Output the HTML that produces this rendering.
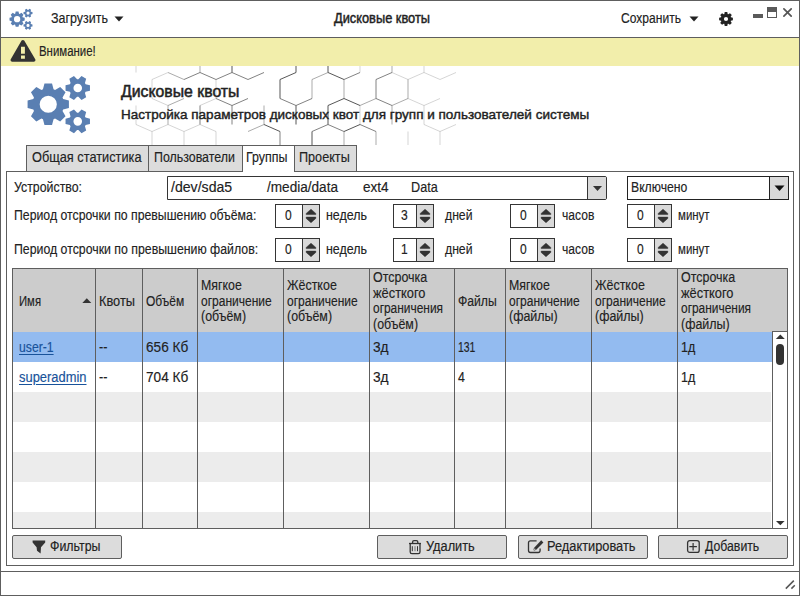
<!DOCTYPE html>
<html><head><meta charset="utf-8">
<style>
*{margin:0;padding:0;box-sizing:border-box}
html,body{width:800px;height:596px;overflow:hidden;background:#fff}
body{position:relative;font-family:"Liberation Sans",sans-serif;font-size:12.5px;color:#222}
.a{position:absolute}
.t{position:absolute;white-space:nowrap;line-height:15px;transform-origin:0 0;-webkit-text-stroke:0.15px currentColor}
</style></head><body>
<div class="a" style="left:0px;top:0px;width:800px;height:596px;border:1px solid #5e5e5e;background:#fff;"></div>
<div class="a" style="left:1px;top:37px;width:798px;height:1px;background:#5e5e5e;"></div>
<div class="a" style="left:1px;top:38px;width:798px;height:28px;background:#f2eeab;"></div>
<svg class="a" style="left:0;top:0" width="40" height="37" viewBox="0 0 40 37">
<g fill="#5a7fb2" fill-rule="evenodd">
<path transform="translate(17.1,19.2) scale(0.367)" d="M-5.30,-14.89 L-3.78,-20.66 L3.78,-20.66 L5.30,-14.89 L5.80,-14.70 L6.29,-14.49 L6.78,-14.27 L11.93,-17.28 L17.28,-11.93 L14.27,-6.78 L14.49,-6.29 L14.70,-5.80 L14.89,-5.30 L20.66,-3.78 L20.66,3.78 L14.89,5.30 L14.70,5.80 L14.49,6.29 L14.27,6.78 L17.28,11.93 L11.93,17.28 L6.78,14.27 L6.29,14.49 L5.80,14.70 L5.30,14.89 L3.78,20.66 L-3.78,20.66 L-5.30,14.89 L-5.80,14.70 L-6.29,14.49 L-6.78,14.27 L-11.93,17.28 L-17.28,11.93 L-14.27,6.78 L-14.49,6.29 L-14.70,5.80 L-14.89,5.30 L-20.66,3.78 L-20.66,-3.78 L-14.89,-5.30 L-14.70,-5.80 L-14.49,-6.29 L-14.27,-6.78 L-17.28,-11.93 L-11.93,-17.28 L-6.78,-14.27 L-6.29,-14.49 L-5.80,-14.70ZM8.60,0.00A8.6,8.6 0 1 0 -8.60,0.00A8.6,8.6 0 1 0 8.60,0.00Z"/>
<path transform="translate(28.0,13.1) scale(0.367)" d="M7.84,-3.77 L12.21,-2.68 L12.21,2.68 L7.84,3.77 L7.64,4.16 L7.42,4.54 L7.19,4.90 L8.42,9.23 L3.78,11.91 L0.65,8.68 L0.22,8.70 L-0.22,8.70 L-0.65,8.68 L-3.78,11.91 L-8.42,9.23 L-7.19,4.90 L-7.42,4.54 L-7.64,4.16 L-7.84,3.77 L-12.21,2.68 L-12.21,-2.68 L-7.84,-3.77 L-7.64,-4.16 L-7.42,-4.54 L-7.19,-4.90 L-8.42,-9.23 L-3.78,-11.91 L-0.65,-8.68 L-0.22,-8.70 L0.22,-8.70 L0.65,-8.68 L3.78,-11.91 L8.42,-9.23 L7.19,-4.90 L7.42,-4.54 L7.64,-4.16ZM4.30,0.00A4.3,4.3 0 1 0 -4.30,0.00A4.3,4.3 0 1 0 4.30,0.00Z"/>
<path transform="translate(28.0,25.4) scale(0.367)" d="M7.84,-3.77 L12.21,-2.68 L12.21,2.68 L7.84,3.77 L7.64,4.16 L7.42,4.54 L7.19,4.90 L8.42,9.23 L3.78,11.91 L0.65,8.68 L0.22,8.70 L-0.22,8.70 L-0.65,8.68 L-3.78,11.91 L-8.42,9.23 L-7.19,4.90 L-7.42,4.54 L-7.64,4.16 L-7.84,3.77 L-12.21,2.68 L-12.21,-2.68 L-7.84,-3.77 L-7.64,-4.16 L-7.42,-4.54 L-7.19,-4.90 L-8.42,-9.23 L-3.78,-11.91 L-0.65,-8.68 L-0.22,-8.70 L0.22,-8.70 L0.65,-8.68 L3.78,-11.91 L8.42,-9.23 L7.19,-4.90 L7.42,-4.54 L7.64,-4.16ZM4.30,0.00A4.3,4.3 0 1 0 -4.30,0.00A4.3,4.3 0 1 0 4.30,0.00Z"/>
</g></svg>
<div class="t" style="left:50.90px;top:10.75px;font-size:14.0px;font-weight:normal;color:#222;transform:scaleX(0.8917);">Загрузить</div>
<svg class="a" style="left:114px;top:16px" width="10" height="6"><path d="M0.5,0.5 L9.5,0.5 L5,5.5Z" fill="#222"/></svg>
<div class="t" style="left:333.70px;top:11.15px;font-size:14.0px;font-weight:normal;color:#222;transform:scaleX(0.9151);-webkit-text-stroke:0.45px #222">Дисковые квоты</div>
<div class="t" style="left:621.40px;top:10.75px;font-size:14.0px;font-weight:normal;color:#222;transform:scaleX(0.8625);">Сохранить</div>
<svg class="a" style="left:689px;top:16px" width="10" height="6"><path d="M0.5,0.5 L9.5,0.5 L5,5.5Z" fill="#222"/></svg>
<svg class="a" style="left:716px;top:9px" width="20" height="20"><path fill="#222" fill-rule="evenodd" transform="translate(10,10)" d="M-1.67,-4.92 L-1.29,-6.88 L1.29,-6.88 L1.67,-4.92 L1.88,-4.85 L2.09,-4.76 L2.30,-4.66 L3.95,-5.78 L5.78,-3.95 L4.66,-2.30 L4.76,-2.09 L4.85,-1.88 L4.92,-1.67 L6.88,-1.29 L6.88,1.29 L4.92,1.67 L4.85,1.88 L4.76,2.09 L4.66,2.30 L5.78,3.95 L3.95,5.78 L2.30,4.66 L2.09,4.76 L1.88,4.85 L1.67,4.92 L1.29,6.88 L-1.29,6.88 L-1.67,4.92 L-1.88,4.85 L-2.09,4.76 L-2.30,4.66 L-3.95,5.78 L-5.78,3.95 L-4.66,2.30 L-4.76,2.09 L-4.85,1.88 L-4.92,1.67 L-6.88,1.29 L-6.88,-1.29 L-4.92,-1.67 L-4.85,-1.88 L-4.76,-2.09 L-4.66,-2.30 L-5.78,-3.95 L-3.95,-5.78 L-2.30,-4.66 L-2.09,-4.76 L-1.88,-4.85ZM2.10,0.00A2.1,2.1 0 1 0 -2.10,0.00A2.1,2.1 0 1 0 2.10,0.00Z"/></svg>
<div class="a" style="left:753px;top:14px;width:10px;height:4px;background:#5a5a5a;"></div>
<div class="a" style="left:767px;top:7px;width:10px;height:11px;border:1px solid #5a5a5a;background:#fff;"></div>
<div class="a" style="left:767px;top:7px;width:10px;height:5px;background:#5a5a5a;"></div>
<svg class="a" style="left:781px;top:6px" width="14" height="14"><path d="M2.9,2.9 L10.2,10.2 M10.2,2.9 L2.9,10.2" stroke="#555" stroke-width="1.7" stroke-linecap="round"/></svg>
<svg class="a" style="left:9px;top:38px" width="28" height="26" viewBox="0 0 28 26">
<path fill="#333" fill-rule="evenodd" d="M12.6,2.6 Q13.9,1.2 15.2,2.6 L26.4,21.6 Q26.9,23.7 25,23.7 L3,23.7 Q1.1,23.7 1.6,21.6 Z M12,8.7 L12,15.7 L15.9,15.7 L15.9,8.7 Z M12,17.6 L12,20.7 L15.9,20.7 L15.9,17.6 Z"/></svg>
<div class="t" style="left:39.00px;top:43.75px;font-size:14.0px;font-weight:normal;color:#222;transform:scaleX(0.8155);">Внимание!</div>
<svg class="a" style="left:0;top:66px" width="800" height="79" viewBox="0 66 800 79">
<g fill="none" stroke="#444" stroke-width="0.9"><path d="M136.0,53.5L136.0,72.5M136.0,105.5L136.0,124.5M136.0,124.5L152.0,131.5M136,157.5L152.0,150.5M136.0,176.5L152.0,183.5M152.0,27.5L152.0,46.5M152.0,27.5L168,20.5M152.0,46.5L168,53.5M152.0,79.5L152.0,98.5M152.0,79.5L168.0,72.5M152.0,98.5L168,105.5M152.0,131.5L152.0,150.5M152.0,131.5L168.0,124.5M152.0,150.5L168,157.5M152.0,183.5L168.0,176.5M168.0,124.5L184.0,131.5M168.0,157.5L168.0,176.5M184.0,131.5L184.0,150.5M184.0,131.5L200.0,124.5M200,20.5L216.0,27.5M200,105.5L216.0,98.5M200.0,124.5L216.0,131.5M200.0,157.5L200.0,176.5M216.0,46.5L232,53.5M216.0,79.5L216.0,98.5M216.0,131.5L216.0,150.5M216.0,150.5L232,157.5M216.0,183.5L232.0,176.5M344.0,46.5L360,53.5M360,20.5L376.0,27.5M360.0,53.5L360.0,72.5M360,53.5L376.0,46.5M360.0,105.5L360.0,124.5M376.0,183.5L392.0,176.5M392,53.5L408.0,46.5M392.0,72.5L408.0,79.5M408.0,79.5L424.0,72.5M408.0,98.5L424,105.5M408.0,131.5L408.0,150.5M424,20.5L440.0,27.5M424.0,53.5L424.0,72.5M424,53.5L440.0,46.5M424.0,72.5L440.0,79.5M424.0,105.5L424.0,124.5M424,105.5L440.0,98.5M424.0,124.5L440.0,131.5M424.0,157.5L424.0,176.5M424,157.5L440.0,150.5M424.0,176.5L440.0,183.5M440.0,27.5L440.0,46.5M440.0,79.5L456.0,72.5M440.0,131.5L440.0,150.5M440.0,131.5L456.0,124.5M440.0,150.5L456,157.5" stroke-opacity="0.25"/><path d="M168,20.5L184.0,27.5M168,53.5L184.0,46.5M168.0,72.5L184.0,79.5M168.0,105.5L168.0,124.5M168,105.5L184.0,98.5M168,157.5L184.0,150.5M184.0,27.5L184.0,46.5M200.0,53.5L200.0,72.5M248.0,27.5L264,20.5M248.0,46.5L264,53.5M248.0,131.5L264.0,124.5M248.0,183.5L264.0,176.5M264.0,105.5L264.0,124.5M264.0,176.5L280.0,183.5M280.0,27.5L280.0,46.5M280.0,27.5L296,20.5M280.0,183.5L296.0,176.5M296,20.5L312.0,27.5M312.0,79.5L312.0,98.5M312.0,79.5L328.0,72.5M312.0,183.5L328.0,176.5M328,20.5L344.0,27.5M328.0,157.5L328.0,176.5M328.0,176.5L344.0,183.5M344.0,79.5L344.0,98.5M344.0,131.5L344.0,150.5M360,105.5L376.0,98.5M360,157.5L376.0,150.5M360.0,176.5L376.0,183.5M376.0,46.5L392,53.5M376.0,131.5L376.0,150.5M392,20.5L408.0,27.5M392.0,53.5L392.0,72.5M392.0,105.5L392.0,124.5M392,105.5L408.0,98.5M392.0,176.5L408.0,183.5M408.0,27.5L408.0,46.5M408.0,46.5L424,53.5M408.0,79.5L408.0,98.5M408.0,183.5L424.0,176.5" stroke-opacity="0.5"/><path d="M184.0,79.5L200.0,72.5M184.0,150.5L200,157.5M200,53.5L216.0,46.5M200.0,72.5L216.0,79.5M200.0,105.5L200.0,124.5M200,157.5L216.0,150.5M200.0,176.5L216.0,183.5M216.0,79.5L232.0,72.5M216.0,98.5L232,105.5M232,20.5L248.0,27.5M232,53.5L248.0,46.5M232.0,72.5L248.0,79.5M232.0,105.5L232.0,124.5M232,105.5L248.0,98.5M248.0,79.5L264.0,72.5M264.0,157.5L264.0,176.5M280.0,98.5L296,105.5M280.0,131.5L280.0,150.5M296,105.5L312.0,98.5M296.0,157.5L296.0,176.5M296.0,176.5L312.0,183.5M312.0,46.5L328,53.5M312.0,131.5L328.0,124.5M328.0,124.5L344.0,131.5M328,157.5L344.0,150.5M344.0,79.5L360.0,72.5M360.0,124.5L376.0,131.5M360.0,157.5L360.0,176.5M376.0,27.5L376.0,46.5M376.0,79.5L376.0,98.5M376.0,79.5L392.0,72.5M376.0,98.5L392,105.5M376.0,150.5L392,157.5" stroke-opacity="0.75"/><path d="M232.0,53.5L232.0,72.5M232.0,157.5L232.0,176.5M232,157.5L248.0,150.5M232.0,176.5L248.0,183.5M248.0,27.5L248.0,46.5M264.0,124.5L280.0,131.5M280.0,79.5L280.0,98.5M280.0,79.5L296.0,72.5M296.0,53.5L296.0,72.5M296.0,105.5L296.0,124.5M312.0,27.5L312.0,46.5M312.0,27.5L328,20.5M312.0,131.5L312.0,150.5M312.0,150.5L328,157.5M328.0,53.5L328.0,72.5M328,53.5L344.0,46.5M328.0,72.5L344.0,79.5M328.0,105.5L328.0,124.5M328,105.5L344.0,98.5M344.0,98.5L360,105.5M344.0,131.5L360.0,124.5M344.0,150.5L360,157.5M344.0,183.5L360.0,176.5" stroke-opacity="1.0"/></g>
</svg>
<svg class="a" style="left:0;top:66px" width="100" height="79" viewBox="0 66 100 79">
<g fill="#5a7fb2" fill-rule="evenodd">
<path transform="translate(48.25,104.25)" d="M-5.30,-14.89 L-3.78,-20.66 L3.78,-20.66 L5.30,-14.89 L5.80,-14.70 L6.29,-14.49 L6.78,-14.27 L11.93,-17.28 L17.28,-11.93 L14.27,-6.78 L14.49,-6.29 L14.70,-5.80 L14.89,-5.30 L20.66,-3.78 L20.66,3.78 L14.89,5.30 L14.70,5.80 L14.49,6.29 L14.27,6.78 L17.28,11.93 L11.93,17.28 L6.78,14.27 L6.29,14.49 L5.80,14.70 L5.30,14.89 L3.78,20.66 L-3.78,20.66 L-5.30,14.89 L-5.80,14.70 L-6.29,14.49 L-6.78,14.27 L-11.93,17.28 L-17.28,11.93 L-14.27,6.78 L-14.49,6.29 L-14.70,5.80 L-14.89,5.30 L-20.66,3.78 L-20.66,-3.78 L-14.89,-5.30 L-14.70,-5.80 L-14.49,-6.29 L-14.27,-6.78 L-17.28,-11.93 L-11.93,-17.28 L-6.78,-14.27 L-6.29,-14.49 L-5.80,-14.70ZM8.60,0.00A8.6,8.6 0 1 0 -8.60,0.00A8.6,8.6 0 1 0 8.60,0.00Z"/>
<path transform="translate(77.75,88)" d="M7.84,-3.77 L12.21,-2.68 L12.21,2.68 L7.84,3.77 L7.64,4.16 L7.42,4.54 L7.19,4.90 L8.42,9.23 L3.78,11.91 L0.65,8.68 L0.22,8.70 L-0.22,8.70 L-0.65,8.68 L-3.78,11.91 L-8.42,9.23 L-7.19,4.90 L-7.42,4.54 L-7.64,4.16 L-7.84,3.77 L-12.21,2.68 L-12.21,-2.68 L-7.84,-3.77 L-7.64,-4.16 L-7.42,-4.54 L-7.19,-4.90 L-8.42,-9.23 L-3.78,-11.91 L-0.65,-8.68 L-0.22,-8.70 L0.22,-8.70 L0.65,-8.68 L3.78,-11.91 L8.42,-9.23 L7.19,-4.90 L7.42,-4.54 L7.64,-4.16ZM4.30,0.00A4.3,4.3 0 1 0 -4.30,0.00A4.3,4.3 0 1 0 4.30,0.00Z"/>
<path transform="translate(77.75,121.35)" d="M7.84,-3.77 L12.21,-2.68 L12.21,2.68 L7.84,3.77 L7.64,4.16 L7.42,4.54 L7.19,4.90 L8.42,9.23 L3.78,11.91 L0.65,8.68 L0.22,8.70 L-0.22,8.70 L-0.65,8.68 L-3.78,11.91 L-8.42,9.23 L-7.19,4.90 L-7.42,4.54 L-7.64,4.16 L-7.84,3.77 L-12.21,2.68 L-12.21,-2.68 L-7.84,-3.77 L-7.64,-4.16 L-7.42,-4.54 L-7.19,-4.90 L-8.42,-9.23 L-3.78,-11.91 L-0.65,-8.68 L-0.22,-8.70 L0.22,-8.70 L0.65,-8.68 L3.78,-11.91 L8.42,-9.23 L7.19,-4.90 L7.42,-4.54 L7.64,-4.16ZM4.30,0.00A4.3,4.3 0 1 0 -4.30,0.00A4.3,4.3 0 1 0 4.30,0.00Z"/>
</g></svg>
<div class="t" style="left:121.10px;top:84.09px;font-size:15.6px;font-weight:normal;color:#222;transform:scaleX(1.0138);-webkit-text-stroke:0.5px #222">Дисковые квоты</div>
<div class="t" style="left:121.40px;top:106.59px;font-size:13.6px;font-weight:normal;color:#222;transform:scaleX(0.9942);-webkit-text-stroke:0.42px #222">Настройка параметров дисковых квот для групп и пользователей системы</div>
<div class="a" style="left:26px;top:145px;width:123px;height:27px;border:1px solid #5e5e5e;background:#dcdcdc;"></div>
<div class="a" style="left:148px;top:145px;width:95px;height:27px;border:1px solid #5e5e5e;background:#dcdcdc;"></div>
<div class="a" style="left:294px;top:145px;width:63px;height:27px;border:1px solid #5e5e5e;background:#dcdcdc;"></div>
<div class="a" style="left:6px;top:171px;width:788px;height:395px;border:1px solid #5e5e5e;background:#fff;"></div>
<div class="a" style="left:242px;top:145px;width:53px;height:27px;border:1px solid #5e5e5e;background:#fff;border-bottom:none"></div>
<div class="t" style="left:31.90px;top:149.65px;font-size:14.0px;font-weight:normal;color:#222;transform:scaleX(0.9117);">Общая статистика</div>
<div class="t" style="left:153.80px;top:149.65px;font-size:14.0px;font-weight:normal;color:#222;transform:scaleX(0.8853);">Пользователи</div>
<div class="t" style="left:246.00px;top:149.65px;font-size:14.0px;font-weight:normal;color:#222;transform:scaleX(0.8896);">Группы</div>
<div class="t" style="left:299.40px;top:149.65px;font-size:14.0px;font-weight:normal;color:#222;transform:scaleX(0.9033);">Проекты</div>
<div class="t" style="left:14.10px;top:179.65px;font-size:14.0px;font-weight:normal;color:#222;transform:scaleX(0.8817);">Устройство:</div>
<div class="a" style="left:167px;top:176px;width:440px;height:24px;border:1px solid #353535;background:#fff;border-radius:0 2px 2px 0"></div>
<div class="a" style="left:587px;top:177px;width:1px;height:22px;background:#353535;"></div>
<div class="a" style="left:588px;top:177px;width:18px;height:22px;background:#d9d9d9;border-radius:0 1px 1px 0"></div>
<svg class="a" style="left:592px;top:185px" width="11" height="7"><path d="M1,1 L10,1 L5.5,5.9Z" fill="#333"/></svg>
<div class="t" style="left:170.80px;top:179.65px;font-size:14.0px;font-weight:normal;color:#222;transform:scaleX(1.0082);">/dev/sda5</div>
<div class="t" style="left:267.40px;top:179.65px;font-size:14.0px;font-weight:normal;color:#222;transform:scaleX(0.9704);">/media/data</div>
<div class="t" style="left:362.80px;top:179.65px;font-size:14.0px;font-weight:normal;color:#222;transform:scaleX(0.9675);">ext4</div>
<div class="t" style="left:411.00px;top:179.65px;font-size:14.0px;font-weight:normal;color:#222;transform:scaleX(0.9026);">Data</div>
<div class="a" style="left:627px;top:176px;width:162px;height:24px;border:1px solid #222;background:#fff;"></div>
<div class="a" style="left:769px;top:177px;width:1px;height:22px;background:#222;"></div>
<div class="a" style="left:770px;top:177px;width:18px;height:22px;background:#d9d9d9;"></div>
<svg class="a" style="left:774px;top:185px" width="11" height="7"><path d="M0.5,0.5 L10.5,0.5 L5.5,6Z" fill="#111"/></svg>
<div class="t" style="left:630.80px;top:179.65px;font-size:14.0px;font-weight:normal;color:#222;transform:scaleX(0.8718);">Включено</div>
<div class="t" style="left:14.15px;top:207.85px;font-size:14.0px;font-weight:normal;color:#222;transform:scaleX(0.8774);">Период отсрочки по превышению объёма:</div>
<div class="a" style="left:275px;top:204px;width:45px;height:24px;border:1px solid #353535;background:#fff;"></div>
<div class="a" style="left:302px;top:205px;width:1px;height:22px;background:#353535;"></div>
<div class="a" style="left:303px;top:205px;width:16px;height:22px;background:#d9d9d9;"></div>
<svg class="a" style="left:305.0px;top:208px" width="12" height="16"><path d="M1.2,6.6 L1.2,5.4 L6,1.2 L10.8,5.4 L10.8,6.6Z M1.2,9.1 L10.8,9.1 L10.8,10.4 L6,14.7 L1.2,10.4Z" fill="#333" stroke="#333" stroke-width="0.5" stroke-linejoin="round"/></svg>
<div class="t" style="left:284.90px;top:207.65px;font-size:14.0px;font-weight:normal;color:#222;transform:scaleX(0.8600);">0</div>
<div class="t" style="left:326.40px;top:207.85px;font-size:14.0px;font-weight:normal;color:#222;transform:scaleX(0.8883);">недель</div>
<div class="a" style="left:393px;top:204px;width:41px;height:24px;border:1px solid #353535;background:#fff;"></div>
<div class="a" style="left:416px;top:205px;width:1px;height:22px;background:#353535;"></div>
<div class="a" style="left:417px;top:205px;width:16px;height:22px;background:#d9d9d9;"></div>
<svg class="a" style="left:419.0px;top:208px" width="12" height="16"><path d="M1.2,6.6 L1.2,5.4 L6,1.2 L10.8,5.4 L10.8,6.6Z M1.2,9.1 L10.8,9.1 L10.8,10.4 L6,14.7 L1.2,10.4Z" fill="#333" stroke="#333" stroke-width="0.5" stroke-linejoin="round"/></svg>
<div class="t" style="left:400.90px;top:207.65px;font-size:14.0px;font-weight:normal;color:#222;transform:scaleX(0.8600);">3</div>
<div class="t" style="left:444.70px;top:207.85px;font-size:14.0px;font-weight:normal;color:#222;transform:scaleX(0.8726);">дней</div>
<div class="a" style="left:510px;top:204px;width:45px;height:24px;border:1px solid #353535;background:#fff;"></div>
<div class="a" style="left:537px;top:205px;width:1px;height:22px;background:#353535;"></div>
<div class="a" style="left:538px;top:205px;width:16px;height:22px;background:#d9d9d9;"></div>
<svg class="a" style="left:540.0px;top:208px" width="12" height="16"><path d="M1.2,6.6 L1.2,5.4 L6,1.2 L10.8,5.4 L10.8,6.6Z M1.2,9.1 L10.8,9.1 L10.8,10.4 L6,14.7 L1.2,10.4Z" fill="#333" stroke="#333" stroke-width="0.5" stroke-linejoin="round"/></svg>
<div class="t" style="left:519.90px;top:207.65px;font-size:14.0px;font-weight:normal;color:#222;transform:scaleX(0.8600);">0</div>
<div class="t" style="left:562.00px;top:207.85px;font-size:14.0px;font-weight:normal;color:#222;transform:scaleX(0.8622);">часов</div>
<div class="a" style="left:627px;top:204px;width:45px;height:24px;border:1px solid #353535;background:#fff;"></div>
<div class="a" style="left:654px;top:205px;width:1px;height:22px;background:#353535;"></div>
<div class="a" style="left:655px;top:205px;width:16px;height:22px;background:#d9d9d9;"></div>
<svg class="a" style="left:657.0px;top:208px" width="12" height="16"><path d="M1.2,6.6 L1.2,5.4 L6,1.2 L10.8,5.4 L10.8,6.6Z M1.2,9.1 L10.8,9.1 L10.8,10.4 L6,14.7 L1.2,10.4Z" fill="#333" stroke="#333" stroke-width="0.5" stroke-linejoin="round"/></svg>
<div class="t" style="left:636.90px;top:207.65px;font-size:14.0px;font-weight:normal;color:#222;transform:scaleX(0.8600);">0</div>
<div class="t" style="left:678.40px;top:207.85px;font-size:14.0px;font-weight:normal;color:#222;transform:scaleX(0.8190);">минут</div>
<div class="t" style="left:14.15px;top:241.65px;font-size:14.0px;font-weight:normal;color:#222;transform:scaleX(0.8795);">Период отсрочки по превышению файлов:</div>
<div class="a" style="left:275px;top:238px;width:45px;height:24px;border:1px solid #353535;background:#fff;"></div>
<div class="a" style="left:302px;top:239px;width:1px;height:22px;background:#353535;"></div>
<div class="a" style="left:303px;top:239px;width:16px;height:22px;background:#d9d9d9;"></div>
<svg class="a" style="left:305.0px;top:242px" width="12" height="16"><path d="M1.2,6.6 L1.2,5.4 L6,1.2 L10.8,5.4 L10.8,6.6Z M1.2,9.1 L10.8,9.1 L10.8,10.4 L6,14.7 L1.2,10.4Z" fill="#333" stroke="#333" stroke-width="0.5" stroke-linejoin="round"/></svg>
<div class="t" style="left:284.90px;top:241.65px;font-size:14.0px;font-weight:normal;color:#222;transform:scaleX(0.8600);">0</div>
<div class="t" style="left:326.40px;top:241.65px;font-size:14.0px;font-weight:normal;color:#222;transform:scaleX(0.8883);">недель</div>
<div class="a" style="left:393px;top:238px;width:41px;height:24px;border:1px solid #353535;background:#fff;"></div>
<div class="a" style="left:416px;top:239px;width:1px;height:22px;background:#353535;"></div>
<div class="a" style="left:417px;top:239px;width:16px;height:22px;background:#d9d9d9;"></div>
<svg class="a" style="left:419.0px;top:242px" width="12" height="16"><path d="M1.2,6.6 L1.2,5.4 L6,1.2 L10.8,5.4 L10.8,6.6Z M1.2,9.1 L10.8,9.1 L10.8,10.4 L6,14.7 L1.2,10.4Z" fill="#333" stroke="#333" stroke-width="0.5" stroke-linejoin="round"/></svg>
<div class="t" style="left:400.90px;top:241.65px;font-size:14.0px;font-weight:normal;color:#222;transform:scaleX(0.8600);">1</div>
<div class="t" style="left:444.70px;top:241.65px;font-size:14.0px;font-weight:normal;color:#222;transform:scaleX(0.8726);">дней</div>
<div class="a" style="left:510px;top:238px;width:45px;height:24px;border:1px solid #353535;background:#fff;"></div>
<div class="a" style="left:537px;top:239px;width:1px;height:22px;background:#353535;"></div>
<div class="a" style="left:538px;top:239px;width:16px;height:22px;background:#d9d9d9;"></div>
<svg class="a" style="left:540.0px;top:242px" width="12" height="16"><path d="M1.2,6.6 L1.2,5.4 L6,1.2 L10.8,5.4 L10.8,6.6Z M1.2,9.1 L10.8,9.1 L10.8,10.4 L6,14.7 L1.2,10.4Z" fill="#333" stroke="#333" stroke-width="0.5" stroke-linejoin="round"/></svg>
<div class="t" style="left:519.90px;top:241.65px;font-size:14.0px;font-weight:normal;color:#222;transform:scaleX(0.8600);">0</div>
<div class="t" style="left:562.00px;top:241.65px;font-size:14.0px;font-weight:normal;color:#222;transform:scaleX(0.8622);">часов</div>
<div class="a" style="left:627px;top:238px;width:45px;height:24px;border:1px solid #353535;background:#fff;"></div>
<div class="a" style="left:654px;top:239px;width:1px;height:22px;background:#353535;"></div>
<div class="a" style="left:655px;top:239px;width:16px;height:22px;background:#d9d9d9;"></div>
<svg class="a" style="left:657.0px;top:242px" width="12" height="16"><path d="M1.2,6.6 L1.2,5.4 L6,1.2 L10.8,5.4 L10.8,6.6Z M1.2,9.1 L10.8,9.1 L10.8,10.4 L6,14.7 L1.2,10.4Z" fill="#333" stroke="#333" stroke-width="0.5" stroke-linejoin="round"/></svg>
<div class="t" style="left:636.90px;top:241.65px;font-size:14.0px;font-weight:normal;color:#222;transform:scaleX(0.8600);">0</div>
<div class="t" style="left:678.40px;top:241.65px;font-size:14.0px;font-weight:normal;color:#222;transform:scaleX(0.8190);">минут</div>
<div class="a" style="left:12px;top:268px;width:776px;height:261px;border:1px solid #5e5e5e;background:#fff;"></div>
<div class="a" style="left:13px;top:269px;width:774px;height:63px;background:#cccccc;"></div>
<div class="a" style="left:13px;top:332px;width:759px;height:30px;background:#93bbf0;"></div>
<div class="a" style="left:13px;top:392px;width:758px;height:30px;background:#ececec;"></div>
<div class="a" style="left:13px;top:452px;width:758px;height:30px;background:#ececec;"></div>
<div class="a" style="left:13px;top:512px;width:758px;height:16px;background:#ececec;"></div>
<div class="a" style="left:95px;top:269px;width:1px;height:259px;background:#5e5e5e;"></div>
<div class="a" style="left:142px;top:269px;width:1px;height:259px;background:#5e5e5e;"></div>
<div class="a" style="left:197px;top:269px;width:1px;height:259px;background:#5e5e5e;"></div>
<div class="a" style="left:283px;top:269px;width:1px;height:259px;background:#5e5e5e;"></div>
<div class="a" style="left:369px;top:269px;width:1px;height:259px;background:#5e5e5e;"></div>
<div class="a" style="left:454px;top:269px;width:1px;height:259px;background:#5e5e5e;"></div>
<div class="a" style="left:505px;top:269px;width:1px;height:259px;background:#5e5e5e;"></div>
<div class="a" style="left:591px;top:269px;width:1px;height:259px;background:#5e5e5e;"></div>
<div class="a" style="left:677px;top:269px;width:1px;height:259px;background:#5e5e5e;"></div>
<div class="t" style="left:18.65px;top:293.65px;font-size:14.0px;font-weight:normal;color:#222;transform:scaleX(0.8067);">Имя</div>
<svg class="a" style="left:82px;top:298px" width="10" height="6"><path d="M0.3,5 L9.3,5 L4.8,0.3Z" fill="#333"/></svg>
<div class="t" style="left:98.90px;top:293.65px;font-size:14.0px;font-weight:normal;color:#222;transform:scaleX(0.9141);">Квоты</div>
<div class="t" style="left:145.65px;top:293.65px;font-size:14.0px;font-weight:normal;color:#222;transform:scaleX(0.8575);">Объём</div>
<div class="t" style="left:200.65px;top:278.05px;font-size:14.0px;font-weight:normal;color:#222;transform:scaleX(0.8820);">Мягкое</div>
<div class="t" style="left:200.65px;top:293.65px;font-size:14.0px;font-weight:normal;color:#222;transform:scaleX(0.8583);">ограничение</div>
<div class="t" style="left:200.65px;top:309.25px;font-size:14.0px;font-weight:normal;color:#222;transform:scaleX(0.8855);">(объём)</div>
<div class="t" style="left:286.65px;top:278.05px;font-size:14.0px;font-weight:normal;color:#222;transform:scaleX(0.8900);">Жёсткое</div>
<div class="t" style="left:286.65px;top:293.65px;font-size:14.0px;font-weight:normal;color:#222;transform:scaleX(0.8583);">ограничение</div>
<div class="t" style="left:286.65px;top:309.25px;font-size:14.0px;font-weight:normal;color:#222;transform:scaleX(0.8855);">(объём)</div>
<div class="t" style="left:372.90px;top:270.25px;font-size:14.0px;font-weight:normal;color:#222;transform:scaleX(0.8904);">Отсрочка</div>
<div class="t" style="left:372.90px;top:285.85px;font-size:14.0px;font-weight:normal;color:#222;transform:scaleX(0.9175);">жёсткого</div>
<div class="t" style="left:372.90px;top:301.45px;font-size:14.0px;font-weight:normal;color:#222;transform:scaleX(0.8512);">ограничения</div>
<div class="t" style="left:372.90px;top:317.05px;font-size:14.0px;font-weight:normal;color:#222;transform:scaleX(0.8855);">(объём)</div>
<div class="t" style="left:457.90px;top:293.65px;font-size:14.0px;font-weight:normal;color:#222;transform:scaleX(0.8712);">Файлы</div>
<div class="t" style="left:508.90px;top:278.05px;font-size:14.0px;font-weight:normal;color:#222;transform:scaleX(0.8820);">Мягкое</div>
<div class="t" style="left:508.90px;top:293.65px;font-size:14.0px;font-weight:normal;color:#222;transform:scaleX(0.8583);">ограничение</div>
<div class="t" style="left:508.90px;top:309.25px;font-size:14.0px;font-weight:normal;color:#222;transform:scaleX(0.8900);">(файлы)</div>
<div class="t" style="left:594.90px;top:278.05px;font-size:14.0px;font-weight:normal;color:#222;transform:scaleX(0.8900);">Жёсткое</div>
<div class="t" style="left:594.90px;top:293.65px;font-size:14.0px;font-weight:normal;color:#222;transform:scaleX(0.8583);">ограничение</div>
<div class="t" style="left:594.90px;top:309.25px;font-size:14.0px;font-weight:normal;color:#222;transform:scaleX(0.8900);">(файлы)</div>
<div class="t" style="left:680.90px;top:270.25px;font-size:14.0px;font-weight:normal;color:#222;transform:scaleX(0.8904);">Отсрочка</div>
<div class="t" style="left:680.90px;top:285.85px;font-size:14.0px;font-weight:normal;color:#222;transform:scaleX(0.9175);">жёсткого</div>
<div class="t" style="left:680.90px;top:301.45px;font-size:14.0px;font-weight:normal;color:#222;transform:scaleX(0.8512);">ограничения</div>
<div class="t" style="left:680.90px;top:317.05px;font-size:14.0px;font-weight:normal;color:#222;transform:scaleX(0.8900);">(файлы)</div>
<div class="t" style="left:18.50px;top:339.95px;font-size:14.0px;font-weight:normal;color:#18529a;transform:scaleX(0.8718);text-decoration:underline;text-underline-offset:2px">user-1</div>
<div class="t" style="left:99.00px;top:339.95px;font-size:14.0px;font-weight:normal;color:#222;transform:scaleX(0.9009);">--</div>
<div class="t" style="left:145.50px;top:339.95px;font-size:14.0px;font-weight:normal;color:#222;transform:scaleX(0.9740);">656 Кб</div>
<div class="t" style="left:372.85px;top:339.95px;font-size:14.0px;font-weight:normal;color:#222;transform:scaleX(0.9774);">3д</div>
<div class="t" style="left:458.30px;top:339.95px;font-size:14.0px;font-weight:normal;color:#222;transform:scaleX(0.7451);">131</div>
<div class="t" style="left:680.90px;top:339.95px;font-size:14.0px;font-weight:normal;color:#222;transform:scaleX(0.8897);">1д</div>
<div class="t" style="left:18.50px;top:369.75px;font-size:14.0px;font-weight:normal;color:#18529a;transform:scaleX(0.9228);text-decoration:underline;text-underline-offset:2px">superadmin</div>
<div class="t" style="left:99.00px;top:369.75px;font-size:14.0px;font-weight:normal;color:#222;transform:scaleX(0.9009);">--</div>
<div class="t" style="left:145.50px;top:369.75px;font-size:14.0px;font-weight:normal;color:#222;transform:scaleX(0.9740);">704 Кб</div>
<div class="t" style="left:372.85px;top:369.75px;font-size:14.0px;font-weight:normal;color:#222;transform:scaleX(0.9774);">3д</div>
<div class="t" style="left:458.30px;top:369.75px;font-size:14.0px;font-weight:normal;color:#222;transform:scaleX(0.8800);">4</div>
<div class="t" style="left:680.90px;top:369.75px;font-size:14.0px;font-weight:normal;color:#222;transform:scaleX(0.8897);">1д</div>
<div class="a" style="left:772px;top:331px;width:16px;height:198px;border:1px solid #5e5e5e;background:#fff;"></div>
<svg class="a" style="left:775px;top:334px" width="11" height="6"><path d="M0.8,5 L9.8,5 L5.3,0.5Z" fill="#333"/></svg>
<div class="a" style="left:776px;top:344px;width:8px;height:21px;border-radius:4px;background:#333"></div>
<svg class="a" style="left:775px;top:520px" width="11" height="6"><path d="M1,1 L9.6,1 L5.3,5.2Z" fill="#333"/></svg>
<div class="a" style="left:12px;top:535px;width:110px;height:24px;border:1px solid #5e5e5e;background:#dcdcdc;border-radius:2px"></div>
<svg class="a" style="left:32px;top:540px" width="14" height="14"><path d="M0.6,0.6 L13.2,0.6 L13.2,2.6 L9,7.2 L8.6,13.6 L5,10.8 L4.6,7.2 L0.6,2.6Z" fill="#333"/></svg>
<div class="t" style="left:50.15px;top:538.75px;font-size:14.0px;font-weight:normal;color:#222;transform:scaleX(0.8845);">Фильтры</div>
<div class="a" style="left:377px;top:535px;width:130px;height:24px;border:1px solid #5e5e5e;background:#dcdcdc;border-radius:2px"></div>
<svg class="a" style="left:408px;top:539px" width="14" height="16"><g fill="none" stroke="#333" stroke-width="1.3" stroke-linejoin="round"><path d="M1,4.5 H13"/><path d="M4.6,4.3 V3 Q4.6,1.6 6,1.6 H8.4 Q9.8,1.6 9.8,3 V4.3"/><path d="M2.2,4.8 V12.9 Q2.2,14.6 3.9,14.6 H10.3 Q12,14.6 12,12.9 V4.8"/></g><g stroke="#333" stroke-width="1"><path d="M4.3,7.2 V12.2 M9.5,7.2 V12.2"/></g><path d="M7,7.2 V12.2" stroke="#777" stroke-width="1"/></svg>
<div class="t" style="left:426.15px;top:538.75px;font-size:14.0px;font-weight:normal;color:#222;transform:scaleX(0.9120);">Удалить</div>
<div class="a" style="left:518px;top:535px;width:130px;height:24px;border:1px solid #5e5e5e;background:#dcdcdc;border-radius:2px"></div>
<svg class="a" style="left:527px;top:539px" width="18" height="15"><path d="M9.6,1.9 H3.4 Q1.5,1.9 1.5,3.8 V11.6 Q1.5,13.5 3.4,13.5 H11.2 Q13.1,13.5 13.1,11.6 V9.6" fill="none" stroke="#333" stroke-width="1.3"/><path d="M14.2,1.3 L16.4,3.5 L9.2,10.7 Q7.8,11.6 6.6,11.3 Q6.3,10.1 7.2,8.7 Z" fill="#333"/><circle cx="7.8" cy="10.3" r="0.7" fill="#ddd"/></svg>
<div class="t" style="left:547.20px;top:538.75px;font-size:14.0px;font-weight:normal;color:#222;transform:scaleX(0.9151);">Редактировать</div>
<div class="a" style="left:658px;top:535px;width:130px;height:24px;border:1px solid #5e5e5e;background:#dcdcdc;border-radius:2px"></div>
<svg class="a" style="left:686px;top:539px" width="15" height="15"><rect x="1.6" y="1.6" width="11.6" height="11.8" rx="2.2" fill="none" stroke="#333" stroke-width="1.3"/><path d="M7.1,4 V11.6 M3.3,7.6 H10.9" stroke="#333" stroke-width="1.2"/></svg>
<div class="t" style="left:704.80px;top:538.75px;font-size:14.0px;font-weight:normal;color:#222;transform:scaleX(0.8769);">Добавить</div>
<div class="a" style="left:1px;top:571px;width:798px;height:1px;background:#5e5e5e;"></div>
<svg class="a" style="left:780px;top:576px" width="18" height="16"><path d="M5.8,12.6 L13.8,4.6 M11.4,12.6 L14.8,9.3" stroke="#555" stroke-width="1.5" stroke-linecap="butt"/></svg>
</body></html>
